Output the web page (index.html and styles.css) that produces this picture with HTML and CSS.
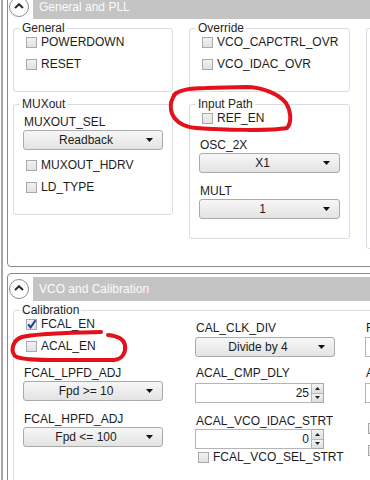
FILE: index.html
```html
<!DOCTYPE html>
<html lang="en">
<head>
    <meta charset="UTF-8">
    <meta name="viewport" content="width=device-width, initial-scale=1.0">
    <title>General and PLL</title>
    <link rel="stylesheet" href="styles.css">
</head>
<body>

    <div class="page">

        <!-- Panel: General and PLL -->
        <section class="panel">
            <div class="head">
                <span class="toggle"><svg width="10" height="6" viewBox="0 0 10 6"><path d="M1 5 L5 1.2 L9 5" fill="none" stroke="#2b2b2b" stroke-width="2"/></svg></span>
                <div class="bar">General and PLL</div>
            </div>

            <div class="panel-body">
                <div class="col">
                    <div class="group">
                        <div class="group-title">General</div>
                        <label class="check"><span class="box"></span>POWERDOWN</label>
                        <label class="check"><span class="box"></span>RESET</label>
                    </div>
                    <div class="group">
                        <div class="group-title">MUXout</div>
                        <div class="field first">
                            <div class="lbl">MUXOUT_SEL</div>
                            <div class="select"><span class="select-value">Readback</span><span class="select-arrow"><svg width="7" height="4"><path d="M0 0h7L3.5 4z"/></svg></span></div>
                        </div>
                        <label class="check after-field"><span class="box"></span>MUXOUT_HDRV</label>
                        <label class="check"><span class="box"></span>LD_TYPE</label>
                    </div>
                </div>

                <div class="col wide">
                    <div class="group">
                        <div class="group-title">Override</div>
                        <label class="check"><span class="box"></span>VCO_CAPCTRL_OVR</label>
                        <label class="check"><span class="box"></span>VCO_IDAC_OVR</label>
                    </div>
                    <div class="group input-path">
                        <div class="group-title">Input Path</div>
                        <label class="check"><span class="box"></span>REF_EN</label>
                        <div class="field after-check">
                            <div class="lbl">OSC_2X</div>
                            <div class="select"><span class="select-value">X1</span><span class="select-arrow"><svg width="7" height="4"><path d="M0 0h7L3.5 4z"/></svg></span></div>
                        </div>
                        <div class="field">
                            <div class="lbl">MULT</div>
                            <div class="select"><span class="select-value">1</span><span class="select-arrow"><svg width="7" height="4"><path d="M0 0h7L3.5 4z"/></svg></span></div>
                        </div>
                    </div>
                </div>

                <div class="col">
                    <div class="group tall"></div>
                </div>
            </div>
        </section>

        <!-- Panel: VCO and Calibration -->
        <section class="panel">
            <div class="head">
                <span class="toggle"><svg width="10" height="6" viewBox="0 0 10 6"><path d="M1 5 L5 1.2 L9 5" fill="none" stroke="#2b2b2b" stroke-width="2"/></svg></span>
                <div class="bar">VCO and Calibration</div>
            </div>

            <div class="panel-body">
                <div class="group calib">
                    <div class="group-title">Calibration</div>
                    <div class="calib-grid">
                        <div class="calib-col">
                            <label class="check"><span class="box checked"><svg width="11" height="11" viewBox="0 0 11 11"><path d="M2.2 5.4 L4.6 8.4 L9.6 1.2" fill="none" stroke="#1c3a9e" stroke-width="2"/></svg></span>FCAL_EN</label>
                            <label class="check"><span class="box"></span>ACAL_EN</label>
                            <div class="field after-check">
                                <div class="lbl">FCAL_LPFD_ADJ</div>
                                <div class="select"><span class="select-value">Fpd &gt;= 10</span><span class="select-arrow"><svg width="7" height="4"><path d="M0 0h7L3.5 4z"/></svg></span></div>
                            </div>
                            <div class="field">
                                <div class="lbl">FCAL_HPFD_ADJ</div>
                                <div class="select"><span class="select-value">Fpd &lt;= 100</span><span class="select-arrow"><svg width="7" height="4"><path d="M0 0h7L3.5 4z"/></svg></span></div>
                            </div>
                        </div>

                        <div class="calib-col shifted">
                            <div class="field">
                                <div class="lbl">CAL_CLK_DIV</div>
                                <div class="select"><span class="select-value">Divide by 4</span><span class="select-arrow"><svg width="7" height="4"><path d="M0 0h7L3.5 4z"/></svg></span></div>
                            </div>
                            <div class="field near">
                                <div class="lbl">ACAL_CMP_DLY</div>
                                <div class="spin"><span class="spin-value">25</span><span class="spin-btns"><span class="spin-btn"><svg width="5" height="3"><path d="M0 3h5L2.5 0z"/></svg></span><span class="spin-btn"><svg width="5" height="3"><path d="M0 0h5L2.5 3z"/></svg></span></span></div>
                            </div>
                            <div class="field">
                                <div class="lbl">ACAL_VCO_IDAC_STRT</div>
                                <div class="spin"><span class="spin-value">0</span><span class="spin-btns"><span class="spin-btn"><svg width="5" height="3"><path d="M0 3h5L2.5 0z"/></svg></span><span class="spin-btn"><svg width="5" height="3"><path d="M0 0h5L2.5 3z"/></svg></span></span></div>
                            </div>
                            <label class="check tight"><span class="box"></span>FCAL_VCO_SEL_STRT</label>
                        </div>

                        <div class="calib-col shifted">
                            <div class="field">
                                <div class="lbl">FCAL_VCO_SEL</div>
                                <div class="spin"><span class="spin-value">0</span><span class="spin-btns"><span class="spin-btn"><svg width="5" height="3"><path d="M0 3h5L2.5 0z"/></svg></span><span class="spin-btn"><svg width="5" height="3"><path d="M0 0h5L2.5 3z"/></svg></span></span></div>
                            </div>
                            <div class="field near">
                                <div class="lbl">ACAL_VCO_IDAC</div>
                                <div class="spin"><span class="spin-value">300</span><span class="spin-btns"><span class="spin-btn"><svg width="5" height="3"><path d="M0 3h5L2.5 0z"/></svg></span><span class="spin-btn"><svg width="5" height="3"><path d="M0 0h5L2.5 3z"/></svg></span></span></div>
                            </div>
                            <label class="check spaced"><span class="box"></span>FCAL_FAST</label>
                            <label class="check"><span class="box"></span>ACAL_FAST</label>
                        </div>
                    </div>
                </div>
            </div>
        </section>
    </div>

    <!-- Red hand-drawn marks -->
    <svg class="marks" width="370" height="480" viewBox="0 0 370 480">
        <path d="M174 95 C180 89, 192 88, 206 88 L246 87 C262 87, 279 94, 286 103 C291 111, 292 122, 287 128 C270 131, 222 130, 196 128 C182 127, 173 120, 171 110 C170 104, 171 99, 176 93" />
        <path d="M101 332 C72 333, 38 333, 22 337 C13 340, 10 350, 15 356 C20 360, 40 360, 60 360 L114 360 C123 359, 126 352, 125 345 C124 339, 117 336, 108 335" />
    </svg>

</body>
</html>
```

FILE: styles.css
```css
/* General */
* {
    box-sizing: border-box;
}

body {
    margin: 0;
    width: 370px;
    height: 480px;
    overflow: hidden;
    position: relative;
    background: #fff;
    font-family: "Liberation Sans", Arial, sans-serif;
    font-size: 12px;
    line-height: 14px;
    color: #1c1c1c;
}

.page {
    width: 600px;
    margin: -9px 0 0 1px;
    border-left: 2px solid #a6a6a6;
    padding-left: 4px;
}

/* Panels */
.panel {
    border: 1px solid #8a8a8a;
    border-radius: 4px;
    padding: 3px 0 17px 0;
}

.panel + .panel {
    margin-top: 6px;
}

.head {
    display: flex;
    align-items: center;
    gap: 4px;
    height: 24px;
    padding-left: 1px;
}

.toggle {
    flex: none;
    width: 20px;
    height: 20px;
    border: 1px solid #8c8c8c;
    border-radius: 50%;
    background: #fff;
    display: flex;
    align-items: center;
    justify-content: center;
    padding-bottom: 2px;
}

.bar {
    flex: 1;
    height: 24px;
    line-height: 24px;
    padding-left: 6px;
    background: #c4c4c4;
    color: #fbfbfb;
    font-size: 12px;
}

.panel-body {
    display: flex;
    gap: 16px;
    align-items: flex-start;
    padding: 9px 0 0 5px;
}

.col {
    width: 160px;
    display: flex;
    flex-direction: column;
    gap: 12px;
}

.col.wide {
    width: 161px;
}

/* Group boxes */
.group {
    border: 1px solid #d6dde4;
    border-radius: 3px;
    padding: 0 9px 20px 9px;
}

.group.input-path {
    padding-bottom: 19px;
}

.group.tall {
    height: 221px;
}

.group.calib {
    flex: 1;
    padding-bottom: 40px;
}

.group-title {
    display: table;
    margin: -8px 0 0 -3px;
    padding: 0 2px;
    background: #fff;
    color: #262626;
}

/* Checkboxes */
.check {
    display: flex;
    align-items: center;
    gap: 4px;
    height: 14px;
    margin-left: 3px;
    white-space: nowrap;
}

.check + .check {
    margin-top: 8px;
}

.check.after-field {
    margin-top: 8px;
}

.check.tight {
    margin-top: 1px;
}

.check.spaced {
    margin-top: 18px;
}

.box {
    flex: none;
    width: 11px;
    height: 11px;
    border: 1px solid #a9a9a9;
    background: linear-gradient(#f1f1f1, #e2e2e2);
    position: relative;
}

.box svg {
    position: absolute;
    left: -1px;
    top: -1px;
}

/* Fields */
.field {
    display: flex;
    flex-direction: column;
    gap: 1px;
    margin-top: 11px;
}

.field.first {
    margin-top: 4px;
}

.field.after-check {
    margin-top: 13px;
}

.field.near {
    gap: 3px;
    margin-top: 9px;
}

.lbl {
    padding-left: 1px;
    white-space: nowrap;
}

.select {
    display: flex;
    height: 20px;
    width: 100%;
    border: 1px solid #aaaaaa;
    border-radius: 3px;
    background: linear-gradient(#f7f7f7, #e3e3e3);
}

.select-value {
    flex: 1;
    text-align: center;
    line-height: 18px;
    padding-left: 2px;
}

.select-arrow {
    width: 16px;
    display: flex;
    align-items: center;
    justify-content: flex-start;
}

.select-arrow svg {
    fill: #111;
}

.spin {
    display: flex;
    height: 20px;
    width: 129px;
}

.spin-value {
    flex: 1;
    border: 1px solid #b5b5b5;
    background: #fff;
    text-align: right;
    line-height: 18px;
    padding-right: 2px;
}

.spin-btns {
    width: 12px;
    display: flex;
    flex-direction: column;
    border: 1px solid #a8a8a8;
    border-left: none;
}

.spin-btn {
    flex: 1;
    display: flex;
    align-items: center;
    justify-content: center;
    background: linear-gradient(#f3f3f3, #dedede);
}

.spin-btn + .spin-btn {
    border-top: 1px solid #b8b8b8;
}

.spin-btn svg {
    fill: #222;
}

/* Calibration grid */
.calib-grid {
    display: grid;
    grid-template-columns: 172px 170px 160px;
}

.calib-col .select {
    width: 140px;
}

.calib-col.shifted {
    padding-top: 4px;
}

.calib-col.shifted .field:first-child {
    margin-top: 0;
    gap: 2px;
}

/* Red marks */
.marks {
    position: absolute;
    left: 0;
    top: 0;
    pointer-events: none;
}

.marks path {
    fill: none;
    stroke: #e2111c;
    stroke-width: 4;
    stroke-linecap: round;
    stroke-linejoin: round;
}
```
